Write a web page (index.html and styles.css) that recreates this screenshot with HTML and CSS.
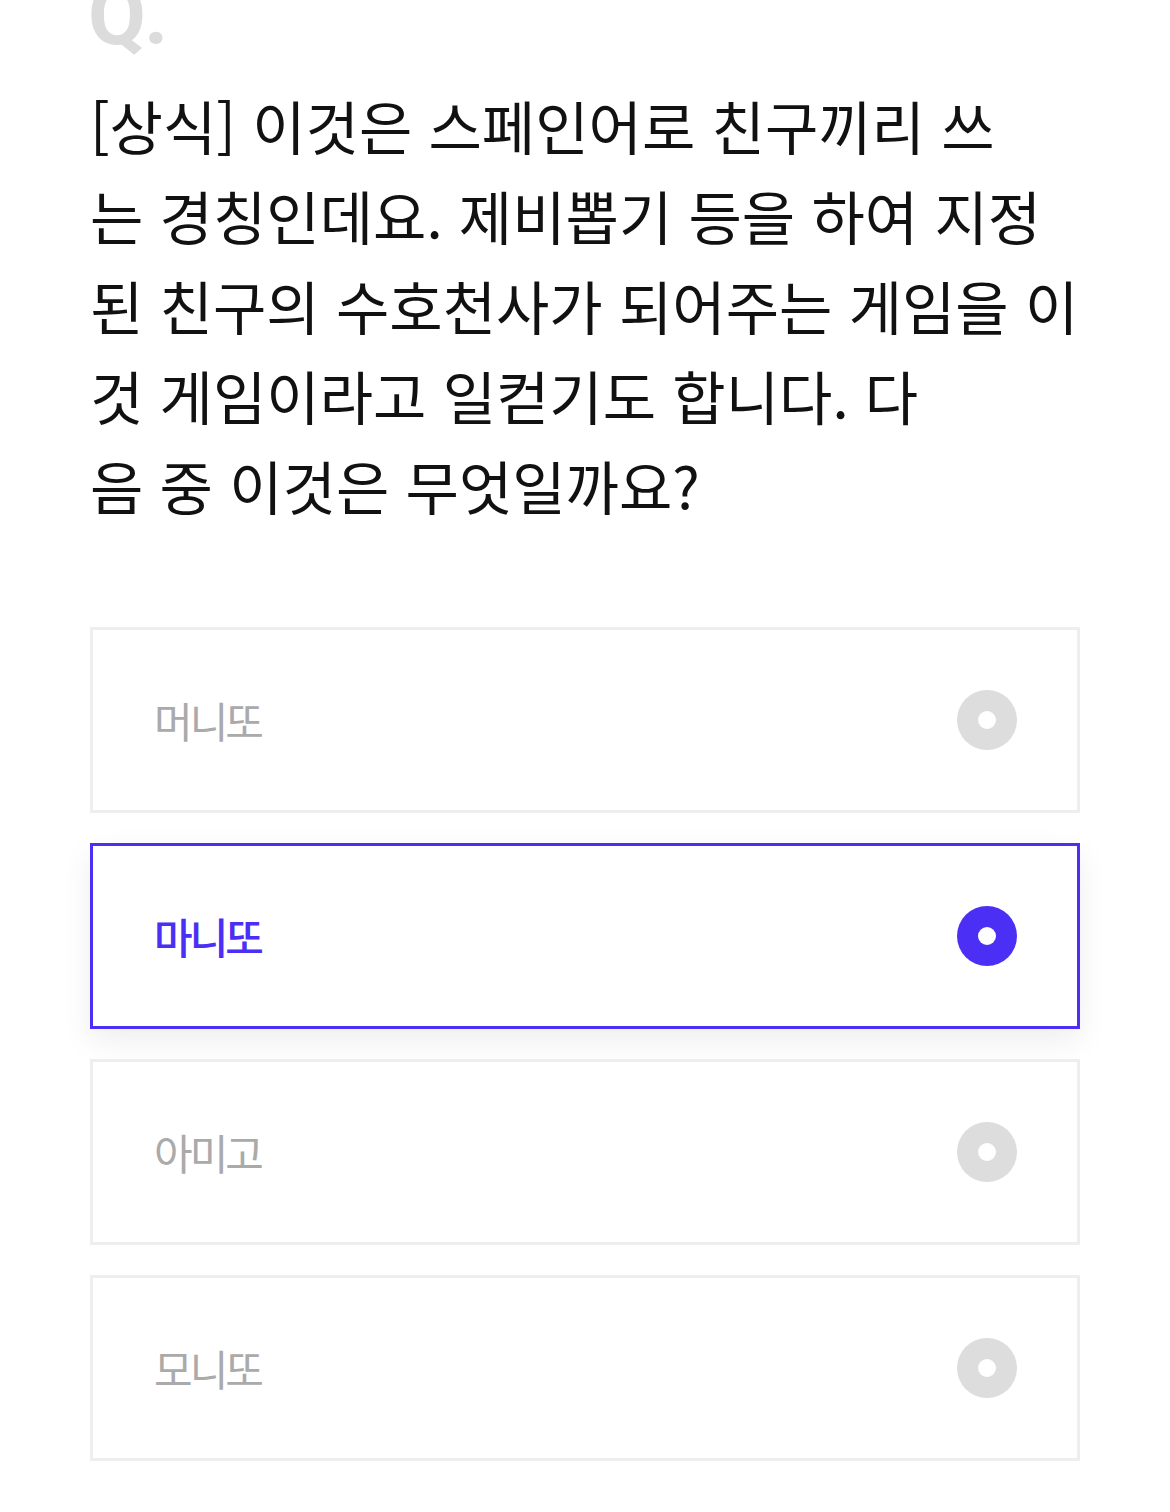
FILE: index.html
```html
<!DOCTYPE html>
<html lang="ko">
<head>
<meta charset="utf-8">
<link rel="stylesheet" href="styles.css">
</head>
<body>
<main class="quiz">
  <div class="q-mark">Q<span class="q-dot">.</span></div>
  <p class="question">[상식] 이것은 스페인어로 친구끼리 쓰<br>는 경칭인데요. 제비뽑기 등을 하여 지정<br>된 친구의 수호천사가 되어주는 게임을 이<br>것 게임이라고 일컫기도 합니다. 다<br>음 중 이것은 무엇일까요?</p>
  <ul class="options">
    <li class="option"><span class="label">머니또</span><span class="radio"></span></li>
    <li class="option selected"><span class="label">마니또</span><span class="radio"></span></li>
    <li class="option"><span class="label">아미고</span><span class="radio"></span></li>
    <li class="option"><span class="label">모니또</span><span class="radio"></span></li>
  </ul>
</main>
</body>
</html>
```
FILE: styles.css
```css
html, body {
  margin: 0;
  padding: 0;
  background: #fff;
}
body {
  font-family: "Noto Sans CJK KR", "Noto Sans", sans-serif;
  overflow: hidden;
}
.quiz {
  padding: 0 90px;
}
.q-mark {
  font-family: Roboto, "Liberation Sans", sans-serif;
  font-weight: 700;
  font-size: 84px;
  line-height: 84px;
  height: 84px;
  color: #dcdcdc;
  margin-top: -26px;
  margin-left: -2px;
}
.q-dot {
  font-size: 84px;
  margin-left: -2px;
}
.question {
  margin: 22px 0 0;
  font-size: 58px;
  line-height: 90px;
  letter-spacing: 0;
  color: #111;
  white-space: nowrap;
  font-weight: 400;
}
.options {
  list-style: none;
  margin: 97px 0 0;
  padding: 0;
  display: flex;
  flex-direction: column;
  gap: 30px;
}
.option {
  box-sizing: border-box;
  height: 186px;
  border: 3px solid #eeeeee;
  background: #fff;
  display: flex;
  align-items: center;
  justify-content: space-between;
  padding: 0 60px 0 61px;
}
.label {
  font-size: 42px;
  letter-spacing: -3px;
  color: #aaaaaa;
  line-height: 1;
}
.radio {
  width: 60px;
  height: 60px;
  border-radius: 50%;
  background: #dddddd;
  display: flex;
  align-items: center;
  justify-content: center;
}
.radio::after {
  content: "";
  width: 18px;
  height: 18px;
  border-radius: 50%;
  background: #fff;
}
.option.selected {
  border-color: #4c2ff4;
  box-shadow: 0 12px 30px rgba(0, 0, 0, 0.07);
}
.option.selected .label {
  color: #4c2ff4;
  font-weight: 500;
}
.option.selected .radio {
  background: #4c2ff4;
}
```
